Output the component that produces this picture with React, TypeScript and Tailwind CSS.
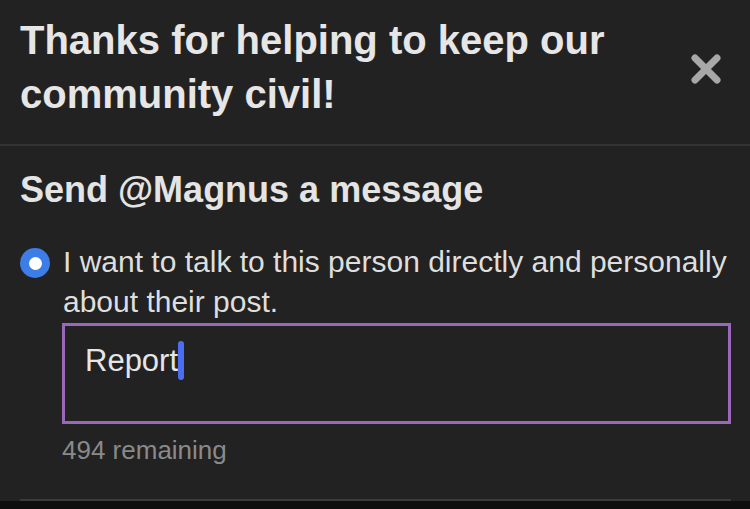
import React from "react";

export default function App() {
  return (
    <div
      className="w-[750px] h-[509px] bg-[#222222] overflow-hidden flex flex-col"
      style={{ fontFamily: '"Liberation Sans", Arial, sans-serif' }}
    >
      {/* Header */}
      <div className="flex items-start justify-between pl-[20px] pr-[28px] pt-[13px] pb-[23px]">
        <h1 className="text-[40px] leading-[54px] font-bold text-[#e6e6e6] w-[620px]">
          Thanks for helping to keep our community civil!
        </h1>
        <button className="mt-[40px] w-[32px] h-[32px] flex items-center justify-center">
          <svg width="32" height="32" viewBox="0 0 32 32">
            <path
              d="M5 5 L27 27 M27 5 L5 27"
              stroke="#a8a8a8"
              strokeWidth="7"
              strokeLinecap="round"
              fill="none"
            />
          </svg>
        </button>
      </div>
      <div className="h-[2px] bg-[#333333]" />

      {/* Body */}
      <div className="flex-1 flex flex-col">
        <div className="ml-[20px] mr-[19px] flex-1 border-b-2 border-[#3a3a3a] pt-[22px]">
          <h2 className="text-[36px] leading-[44px] font-bold text-[#e4e4e4]">
            Send @Magnus a message
          </h2>
          <div className="mt-[30px] flex items-start">
            <div className="mt-[6px] w-[30px] h-[30px] rounded-full bg-[#3d7de8] flex items-center justify-center shrink-0">
              <div className="w-[13px] h-[13px] rounded-full bg-white" />
            </div>
            <p className="ml-[13px] text-[30px] leading-[40px] text-[#dedede]">
              I want to talk to this person directly and personally about their post.
            </p>
          </div>
          <div className="mt-[1px] ml-[42px] h-[101px] border-[3px] border-[#9a67b9] pl-[20px] pt-[15px]">
            <div className="flex items-center h-[39px]">
              <span className="text-[31px] leading-[39px] text-[#e6e6e6]">Report</span>
              <span className="inline-block w-[6px] h-[39px] rounded-full bg-[#4b6df2]" />
            </div>
          </div>
          <div className="mt-[11px] ml-[42px] text-[26px] leading-[30px] text-[#8a8a8a]">
            494 remaining
          </div>
        </div>
        <div className="h-[8px] bg-[#0e0e0e]" />
      </div>
    </div>
  );
}
